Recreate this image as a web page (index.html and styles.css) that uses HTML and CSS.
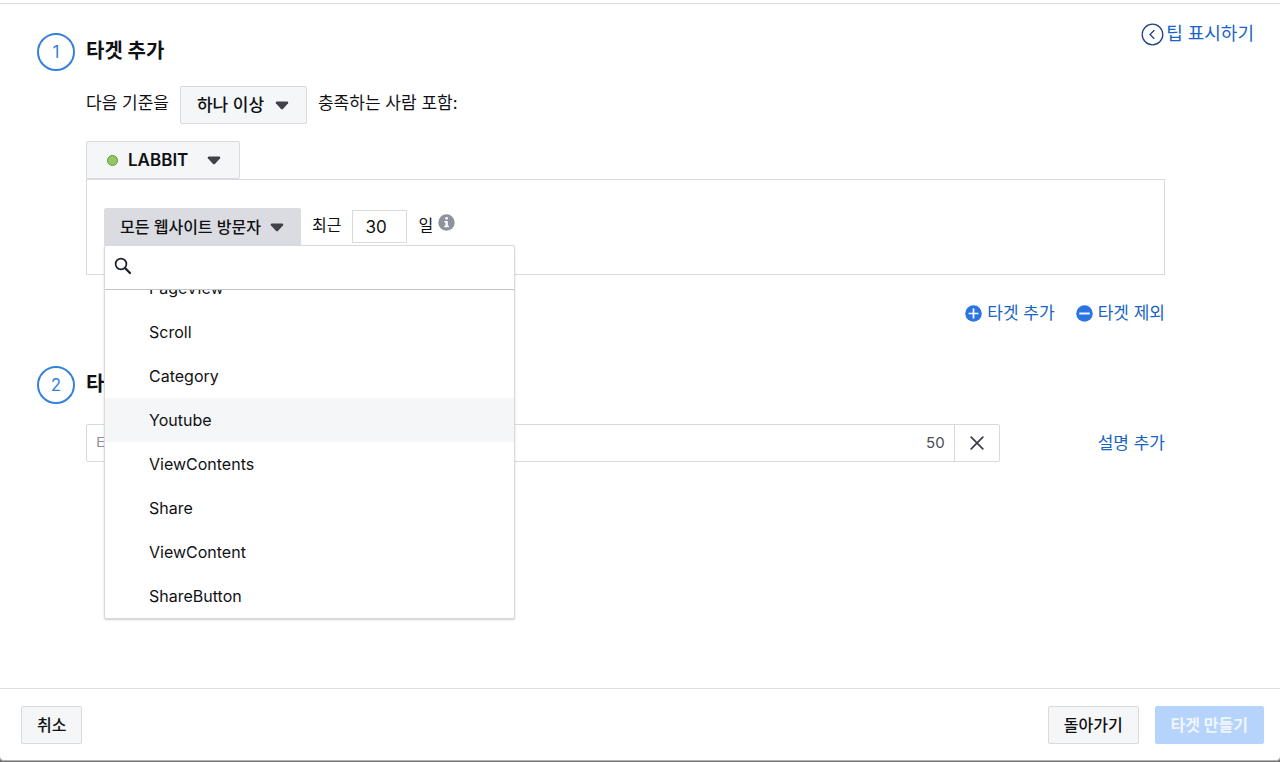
FILE: index.html
```
<!DOCTYPE html>
<html lang="ko">
<head>
    <meta charset="UTF-8">
    <meta name="viewport" content="width=device-width, initial-scale=1.0">
    <title>맞춤 타겟 만들기</title>
    <link rel="stylesheet" href="styles.css">
</head>
<body>
    <div class="dialog">
        <main class="content">
            <a href="#" class="link tips-link">
                <svg width="23" height="23" viewBox="0 0 23 23" fill="none" stroke="#1d4684" stroke-width="1.3">
                    <circle cx="11.5" cy="11.5" r="10.3"/>
                    <path d="M13.3 7.3 9 11.5l4.3 4.2"/>
                </svg>
                팁 표시하기
            </a>

            <section class="step">
                <span class="step-number">1</span>
                <div class="step-body">
                    <h2 class="step-title">타겟 추가</h2>

                    <div class="criteria">
                        <label class="criteria-text" for="match">다음 기준을</label>
                        <div class="select-wrap">
                            <select id="match" class="btn match-select">
                                <option>하나 이상</option>
                            </select>
                            <svg class="caret select-caret" width="14" height="9" viewBox="0 0 14 9"><path d="M1.5.5h11q1.3.6.6 1.7L8.2 7.8q-1.2 1-2.4 0L.9 2.2Q.2 1.1 1.5.5z"/></svg>
                        </div>
                        <span class="criteria-text">충족하는 사람 포함:</span>
                    </div>

                    <button class="btn pixel-btn">
                        <span class="status-dot"></span>
                        LABBIT
                        <svg class="caret" width="14" height="9" viewBox="0 0 14 9"><path d="M1.5.5h11q1.3.6.6 1.7L8.2 7.8q-1.2 1-2.4 0L.9 2.2Q.2 1.1 1.5.5z"/></svg>
                    </button>

                    <div class="rule-box">
                        <div class="event">
                            <button class="btn event-btn" aria-haspopup="listbox" aria-expanded="true">
                                모든 웹사이트 방문자
                                <svg class="caret" width="14" height="9" viewBox="0 0 14 9"><path d="M1.5.5h11q1.3.6.6 1.7L8.2 7.8q-1.2 1-2.4 0L.9 2.2Q.2 1.1 1.5.5z"/></svg>
                            </button>
                            <div class="menu">
                                <div class="menu-search">
                                    <svg width="18" height="18" viewBox="0 0 18 18" fill="none" stroke="#1c1e2b">
                                        <circle cx="7" cy="7" r="5.4" stroke-width="1.7"/>
                                        <path d="m11 11 5 5" stroke-width="2.3" stroke-linecap="round"/>
                                    </svg>
                                    <input type="text" class="search-input" aria-label="검색">
                                </div>
                                <ul class="menu-list" role="listbox">
                                    <li class="menu-item" role="option">PageView</li>
                                    <li class="menu-item" role="option">Scroll</li>
                                    <li class="menu-item" role="option">Category</li>
                                    <li class="menu-item active" role="option">Youtube</li>
                                    <li class="menu-item" role="option">ViewContents</li>
                                    <li class="menu-item" role="option">Share</li>
                                    <li class="menu-item" role="option">ViewContent</li>
                                    <li class="menu-item" role="option">ShareButton</li>
                                </ul>
                            </div>
                        </div>
                        <label class="days-text" for="days">최근</label>
                        <input type="text" id="days" class="days-input" value="30">
                        <span class="days-text">일</span>
                        <svg class="info" width="17" height="17" viewBox="0 0 17 17">
                            <circle cx="8.5" cy="8.5" r="8.2" fill="#8d929e"/>
                            <circle cx="8.6" cy="4.3" r="1.4" fill="#fff"/>
                            <path d="M6.3 7h3.5v4.8h1.1v1.5H6.2v-1.5h1.3V8.5H6.3z" fill="#fff"/>
                        </svg>
                    </div>

                    <div class="audience-links">
                        <a href="#" class="link">
                            <svg width="17" height="17" viewBox="0 0 17 17">
                                <circle cx="8.5" cy="8.5" r="8.3" fill="#2a74e4"/>
                                <path d="M3.6 8.5h9.8M8.5 3.6v9.8" stroke="#fff" stroke-width="1.7"/>
                            </svg>
                            타겟 추가
                        </a>
                        <a href="#" class="link">
                            <svg width="17" height="17" viewBox="0 0 17 17">
                                <circle cx="8.5" cy="8.5" r="8.3" fill="#2a74e4"/>
                                <path d="M3.3 8.5h10.4" stroke="#fff" stroke-width="1.9"/>
                            </svg>
                            타겟 제외
                        </a>
                    </div>
                </div>
            </section>

            <section class="step">
                <span class="step-number">2</span>
                <div class="step-body">
                    <h2 class="step-title">타겟 이름</h2>
                    <div class="name-row">
                        <div class="name-field">
                            <input type="text" class="name-input" placeholder="타겟 이름" aria-label="타겟 이름">
                            <span class="name-count">50</span>
                            <button class="clear-btn" aria-label="지우기">
                                <svg width="14" height="14" viewBox="0 0 14 14" stroke="#3b3e45" stroke-width="1.7" stroke-linecap="round"><path d="m1.2 1.2 11.6 11.6M12.8 1.2 1.2 12.8"/></svg>
                            </button>
                        </div>
                        <a href="#" class="link">설명 추가</a>
                    </div>
                </div>
            </section>
        </main>

        <footer class="footer">
            <button class="btn">취소</button>
            <div class="footer-actions">
                <button class="btn">돌아가기</button>
                <button class="btn primary" disabled>타겟 만들기</button>
            </div>
        </footer>
    </div>
</body>
</html>
```

FILE: styles.css
```
* {
    box-sizing: border-box;
}

body {
    margin: 0;
    background: #747474;
    color: #101114;
    font-family: Inter, "Noto Sans CJK KR", sans-serif;
    font-size: 17px;
    line-height: 24px;
}

button,
input,
select {
    font: inherit;
    color: inherit;
    margin: 0;
}

svg {
    flex: none;
}

.dialog {
    display: flex;
    flex-direction: column;
    min-height: calc(100vh - 1px);
    background: #fff;
    border-bottom: 1px solid #b4b4b4;
    border-radius: 0 0 4px 4px;
}

.content {
    position: relative;
    flex: 1;
    margin-top: 3px;
    padding: 29px 115px 30px 37px;
    border-top: 1px solid #dcdcde;
}

.link {
    display: inline-flex;
    align-items: center;
    gap: 5px;
    color: #1763c6;
    text-decoration: none;
}

.tips-link {
    position: absolute;
    top: 18px;
    right: 26px;
    gap: 2px;
    font-size: 18px;
}

.step {
    display: flex;
    gap: 11px;
    margin-bottom: 41px;
}

.step-number {
    display: flex;
    align-items: center;
    justify-content: center;
    flex: none;
    width: 38px;
    height: 38px;
    border: 2px solid #3482dc;
    border-radius: 50%;
    color: #3482dc;
}

.step-body {
    flex: 1;
    min-width: 0;
}

.step-title {
    margin: 0 0 17px;
    font-size: 20px;
    line-height: 36px;
}

.btn {
    display: flex;
    align-items: center;
    height: 38px;
    padding: 0 15px;
    background: #f4f6f8;
    border: 1px solid #d8dadd;
    border-radius: 2px;
    font-size: 16px;
    font-weight: 500;
    cursor: pointer;
}

.caret {
    fill: #3f424b;
}

.criteria {
    display: flex;
    gap: 11px;
    margin-bottom: 17px;
}

.criteria-text {
    line-height: 34px;
}

.select-wrap {
    position: relative;
}

.match-select {
    appearance: none;
    padding: 0 41px 0 16px;
    font-size: 17px;
}

.select-caret {
    position: absolute;
    top: 15px;
    right: 18px;
    pointer-events: none;
}

.pixel-btn {
    padding: 0 18px 0 20px;
    font-size: 17px;
    font-weight: 600;
}

.pixel-btn .caret {
    margin-left: 19px;
}

.status-dot {
    width: 11px;
    height: 11px;
    margin-right: 10px;
    background: #94c763;
    border: 1px solid #5b9c34;
    border-radius: 50%;
}

.rule-box {
    display: flex;
    height: 96px;
    padding: 28px 17px;
    border: 1px solid #d8dadd;
}

.event {
    position: relative;
}

.event-btn {
    gap: 9px;
    padding: 0 16px 0 15px;
    background: #dadce1;
    border-color: #dadce1;
}

.days-text {
    margin: 0 11px;
    font-size: 16px;
    line-height: 34px;
}

.days-input {
    width: 55px;
    height: 33px;
    margin-top: 2px;
    padding: 0 12px;
    border: 1px solid #d8dadd;
}

.info {
    margin: 6px 0 0 -6px;
}

.menu {
    position: absolute;
    top: 37px;
    left: 0;
    z-index: 1;
    width: 411px;
    background: #fff;
    border: 1px solid #d8dadd;
    border-radius: 2px;
    box-shadow: 0 1px 2px rgba(0, 0, 0, 0.2);
}

.menu-search {
    display: flex;
    align-items: center;
    gap: 12px;
    height: 44px;
    padding: 0 9px 4px;
    border-bottom: 1px solid #c2c2ca;
}

.search-input {
    flex: 1;
    border: 0;
    outline: none;
}

/* list is scrolled to its end */
.menu-list {
    display: flex;
    flex-direction: column;
    justify-content: flex-end;
    height: 328px;
    margin: 0;
    padding: 0;
    overflow: hidden;
    list-style: none;
}

.menu-item {
    flex: none;
    padding: 0 44px;
    font-size: 16px;
    line-height: 44px;
}

.menu-item.active {
    background: #f4f6f8;
}

.audience-links {
    display: flex;
    justify-content: flex-end;
    gap: 21px;
    margin-top: 26px;
}

.name-row {
    display: flex;
    align-items: center;
    gap: 98px;
    margin-top: 22px;
}

.name-field {
    display: flex;
    align-items: center;
    flex: 1;
    height: 38px;
    border: 1px solid #d8dadd;
    border-radius: 2px;
}

.name-input {
    flex: 1;
    padding: 0 9px;
    border: 0;
    outline: none;
    font-size: 16px;
}

.name-input::placeholder {
    color: #8d929e;
}

.name-count {
    padding: 0 9px;
    color: #4b4f56;
    font-size: 15px;
}

.clear-btn {
    display: flex;
    align-items: center;
    justify-content: center;
    align-self: stretch;
    width: 45px;
    padding: 0;
    background: none;
    border: 0;
    border-left: 1px solid #d8dadd;
    cursor: pointer;
}

.footer {
    display: flex;
    justify-content: space-between;
    padding: 17px 16px 16px 21px;
    border-top: 1px solid #dcdee0;
}

.footer-actions {
    display: flex;
    gap: 16px;
}

.primary {
    background: #b5d3fb;
    border-color: #b5d3fb;
    color: #f0f6ff;
    font-weight: 700;
}
```
